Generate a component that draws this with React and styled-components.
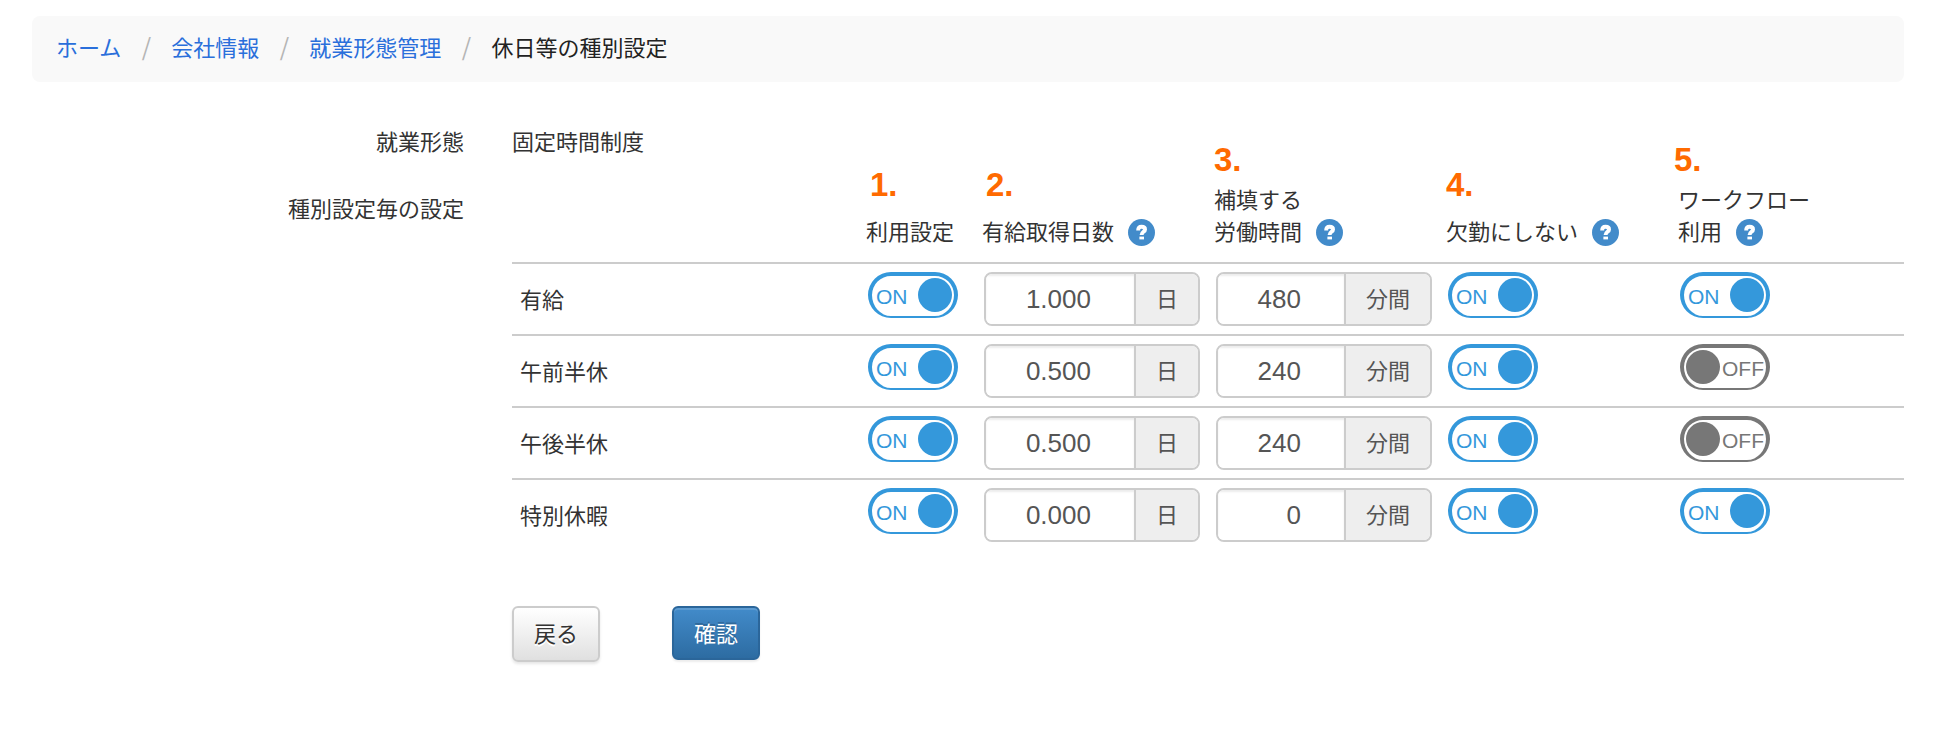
import React, { useState } from 'react';
import styled, { createGlobalStyle, css } from 'styled-components';

const GlobalStyle = createGlobalStyle`
    *, *::before, *::after {
        box-sizing: border-box;
    }

    body {
        margin: 0;
        background: #fff;
        color: #333;
        font-family: "Noto Sans CJK JP", sans-serif;
        font-size: 22px;
        line-height: 32px;
    }

    button, input {
        font-family: inherit;
        font-size: inherit;
        line-height: inherit;
    }
`

const Page = styled.div`
    padding: 16px 42px 64px 32px;
`

const Breadcrumb = styled.ol`
    display: flex;
    margin: 0 0 42px;
    padding: 14px 24px 20px;
    list-style: none;
    background: #f9f9f9;
    border-radius: 8px;
`

const Crumb = styled.li`
    display: flex;
    color: #222;

    & + &::before {
        content: "/";
        width: 50px;
        color: #b5b5b5;
        font-size: 24px;
        text-align: center;
    }
`

const CrumbLink = styled.a`
    color: #2a6fdb;
    text-decoration: none;

    &:hover {
        text-decoration: underline;
    }
`

const FormRow = styled.div`
    display: flex;
    margin: 0 -24px 26px;
`

const RowLabel = styled.div`
    width: 25%;
    padding: ${props => (props.$lower ? '9px' : '0')} 24px 0;
    text-align: right;
`

const RowBody = styled.div`
    width: 75%;
    padding: 0 24px;
`

const Table = styled.table`
    width: 100%;
    table-layout: fixed;
    border-collapse: separate;
    border-spacing: 0;
`

const Col = styled.col`
    width: calc(100% * ${props => props.$span} / 12);
`

const HeadCell = styled.th`
    padding: 0 0 16px 6px;
    font-weight: normal;
    text-align: left;
    vertical-align: bottom;
    white-space: nowrap;
`

const HeadText = styled.div`
    position: relative;
`

const Step = styled.span`
    position: absolute;
    left: ${props => props.$left}px;
    bottom: calc(100% + ${props => props.$rise}px);
    color: #ff6a00;
    font-family: "Liberation Sans", Arial, sans-serif;
    font-size: 33px;
    font-weight: bold;
    line-height: 34px;
`

const HelpButton = styled.button`
    display: inline-block;
    width: 27px;
    height: 27px;
    margin: 0 0 0 14px;
    padding: 0;
    border: 0;
    background: none;
    color: #428bca;
    vertical-align: -6px;
    cursor: pointer;

    svg {
        display: block;
        width: 100%;
        height: 100%;
    }
`

const Cell = styled.td`
    height: 72px;
    padding: 8px;
    border-top: 2px solid #ccc;
    vertical-align: top;
`

const NameCell = styled.th`
    padding: 8px 8px 10px;
    border-top: 2px solid #ccc;
    font-weight: normal;
    text-align: left;
`

const Switch = styled.label`
    position: relative;
    display: flex;
    justify-content: space-between;
    flex-direction: ${props => (props.$on ? 'row' : 'row-reverse')};
    width: 90px;
    height: 46px;
    padding: 2px;
    border: 4px solid;
    border-bottom-width: 2px;
    border-radius: 23px;
    color: ${props => (props.$on ? '#3498db' : '#777')};
    font-family: "Liberation Sans", Arial, sans-serif;
    font-size: 21px;
    line-height: 38px;
    cursor: pointer;
`

const SwitchInput = styled.input`
    position: absolute;
    inset: 0;
    margin: 0;
    opacity: 0;
    cursor: pointer;
`

const SwitchText = styled.span`
    padding-left: ${props => (props.$on ? '2px' : '0')};
`

const Knob = styled.span`
    width: 34px;
    height: 34px;
    border-radius: 50%;
    background: currentColor;
`

const InputGroup = styled.label`
    display: flex;
    height: 54px;
    border: 2px solid #ccc;
    border-radius: 8px;
    overflow: hidden;
    color: #555;
`

const NumberInput = styled.input`
    flex: 1;
    min-width: 0;
    padding: 0 43px 0 8px;
    border: 0;
    outline: 0;
    background: #fff;
    box-shadow: inset 0 2px 2px rgba(0, 0, 0, 0.075);
    color: #555;
    font-family: "Liberation Sans", Arial, sans-serif;
    font-size: 26px;
    text-align: right;
`

const Unit = styled.span`
    padding: 7px 20px;
    border-left: 2px solid #ccc;
    background: #eee;
`

const Actions = styled.div`
    display: flex;
    align-items: flex-start;
    gap: 72px;
    margin-top: 56px;
`

const Button = styled.button`
    padding: 8px 20px 12px;
    border: 2px solid #ccc;
    border-radius: 6px;
    background: linear-gradient(#fff, #e0e0e0);
    box-shadow: 0 2px 3px rgba(0, 0, 0, 0.1);
    color: #333;
    text-shadow: 0 2px 0 #fff;
    cursor: pointer;

    ${props => props.$primary && css`
        padding: 8px 20px 10px;
        border-color: #2b669a;
        background: linear-gradient(#428bca, #2d6ca2);
        box-shadow: inset 0 2px 0 rgba(255, 255, 255, 0.15), 0 2px 2px rgba(0, 0, 0, 0.075);
        color: #fff;
        text-shadow: 0 -2px 0 rgba(0, 0, 0, 0.2);
    `}
`

const crumbs = ['ホーム', '会社情報', '就業形態管理'];

const columns = [
    { step: '1.', lines: ['利用設定'], left: 4, rise: 12 },
    { step: '2.', lines: ['有給取得日数'], help: true, left: 4, rise: 12 },
    { step: '3.', lines: ['補填する', '労働時間'], help: true, left: 0, rise: 5 },
    { step: '4.', lines: ['欠勤にしない'], help: true, left: 0, rise: 12 },
    { step: '5.', lines: ['ワークフロー', '利用'], help: true, left: -4, rise: 5 },
];

const leaves = [
    { name: '有給', days: '1.000', minutes: '480', workflow: true },
    { name: '午前半休', days: '0.500', minutes: '240', workflow: false },
    { name: '午後半休', days: '0.500', minutes: '240', workflow: false },
    { name: '特別休暇', days: '0.000', minutes: '0', workflow: true },
];

function Help({ label }) {
    return (
        <HelpButton type="button" aria-label={`${label}のヘルプ`}>
            <svg viewBox="0 0 27 27" aria-hidden="true">
                <circle cx="13.5" cy="13.5" r="13.5" fill="currentColor" />
                <path
                    d="M10.2 11.4 C10.2 8.4 11.4 7.8 13.6 7.8 C15.8 7.8 17 8.8 17 10.4 C17 12.9 13.6 12.6 13.6 16"
                    fill="none"
                    stroke="#fff"
                    strokeWidth="4"
                />
                <rect x="11.4" y="17.6" width="4.6" height="2.8" fill="#fff" />
            </svg>
        </HelpButton>
    );
}

function Toggle({ label, initial }) {
    const [on, setOn] = useState(initial);

    return (
        <Switch $on={on}>
            <SwitchInput
                type="checkbox"
                aria-label={label}
                checked={on}
                onChange={e => setOn(e.target.checked)}
            />
            <SwitchText $on={on}>{on ? 'ON' : 'OFF'}</SwitchText>
            <Knob />
        </Switch>
    );
}

function UnitInput({ label, initial, unit }) {
    const [value, setValue] = useState(initial);

    return (
        <InputGroup>
            <NumberInput
                type="text"
                inputMode="decimal"
                aria-label={label}
                value={value}
                onChange={e => setValue(e.target.value)}
            />
            <Unit>{unit}</Unit>
        </InputGroup>
    );
}

function LeaveRow({ leave }) {
    return (
        <tr>
            <NameCell scope="row">{leave.name}</NameCell>
            <Cell><Toggle label={`${leave.name} 利用設定`} initial={true} /></Cell>
            <Cell><UnitInput label={`${leave.name} 有給取得日数`} initial={leave.days} unit="日" /></Cell>
            <Cell><UnitInput label={`${leave.name} 補填する労働時間`} initial={leave.minutes} unit="分間" /></Cell>
            <Cell><Toggle label={`${leave.name} 欠勤にしない`} initial={true} /></Cell>
            <Cell><Toggle label={`${leave.name} ワークフロー利用`} initial={leave.workflow} /></Cell>
        </tr>
    );
}

function App() {
    return (
        <Page>
            <GlobalStyle />
            <nav>
                <Breadcrumb>
                    {crumbs.map(crumb => (
                        <Crumb key={crumb}><CrumbLink href="#">{crumb}</CrumbLink></Crumb>
                    ))}
                    <Crumb aria-current="page">休日等の種別設定</Crumb>
                </Breadcrumb>
            </nav>
            <FormRow>
                <RowLabel>就業形態</RowLabel>
                <RowBody>固定時間制度</RowBody>
            </FormRow>
            <FormRow>
                <RowLabel $lower>種別設定毎の設定</RowLabel>
                <RowBody>
                    <Table>
                        <colgroup>
                            <Col $span={3} />
                            <Col $span={1} />
                            <Col $span={2} />
                            <Col $span={2} />
                            <Col $span={2} />
                            <Col $span={2} />
                        </colgroup>
                        <thead>
                            <tr>
                                <td />
                                {columns.map(col => (
                                    <HeadCell key={col.step} scope="col">
                                        <HeadText>
                                            <Step $left={col.left} $rise={col.rise}>{col.step}</Step>
                                            {col.lines[0]}
                                            {col.lines[1] && <br />}
                                            {col.lines[1]}
                                            {col.help && <Help label={col.lines.join('')} />}
                                        </HeadText>
                                    </HeadCell>
                                ))}
                            </tr>
                        </thead>
                        <tbody>
                            {leaves.map(leave => <LeaveRow key={leave.name} leave={leave} />)}
                        </tbody>
                    </Table>
                    <Actions>
                        <Button type="button">戻る</Button>
                        <Button type="submit" $primary>確認</Button>
                    </Actions>
                </RowBody>
            </FormRow>
        </Page>
    );
}

export default App;
